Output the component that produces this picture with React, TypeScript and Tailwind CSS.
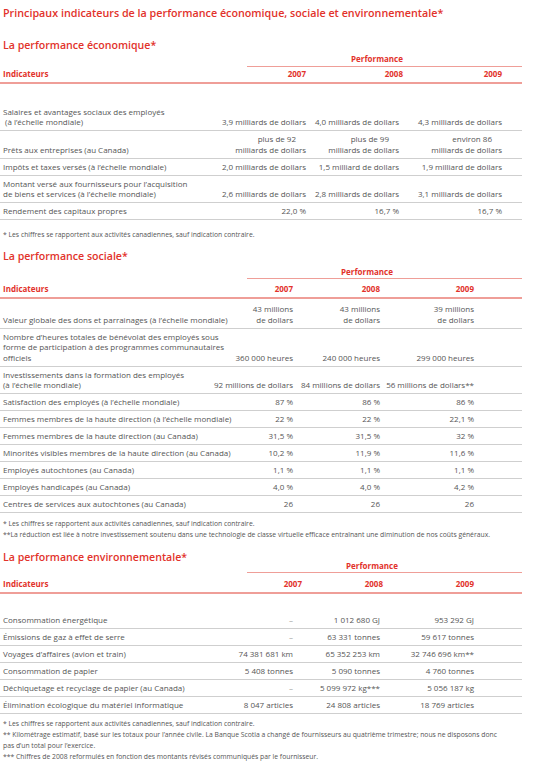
import React from 'react'

type Row = { label: React.ReactNode; values: React.ReactNode[]; pad?: string }

type Block = {
  title: string
  grid: string
  top: string
  perf: string
  perfRow: string
  head: string
  years: string[]
  rows: Row[]
  notesTop: string
  notes: React.ReactNode[]
}

const dash = <span className="text-[#9a9a9a]">–</span>

const economique: Row[] = [
  {
    label: (
      <>
        Salaires et avantages sociaux des employés
        <br />
        &nbsp;(à l’échelle mondiale)
      </>
    ),
    values: ['3,9 milliards de dollars', '4,0 milliards de dollars', '4,3 milliards de dollars'],
    pad: 'pt-[22.5px]',
  },
  {
    label: 'Prêts aux entreprises (au Canada)',
    values: [
      <>
        <span className="pr-[10px]">plus de 92</span>
        <br />
        milliards de dollars
      </>,
      <>
        <span className="pr-[10px]">plus de 99</span>
        <br />
        milliards de dollars
      </>,
      <>
        <span className="pr-[10px]">environ 86</span>
        <br />
        milliards de dollars
      </>,
    ],
  },
  {
    label: 'Impôts et taxes versés (à l’échelle mondiale)',
    values: ['2,0 milliards de dollars', '1,5 milliard de dollars', '1,9 milliard de dollars'],
  },
  {
    label: (
      <>
        Montant versé aux fournisseurs pour l’acquisition
        <br />
        de biens et services (à l’échelle mondiale)
      </>
    ),
    values: ['2,6 milliards de dollars', '2,8 milliards de dollars', '3,1 milliards de dollars'],
  },
  { label: 'Rendement des capitaux propres', values: ['22,0 %', '16,7 %', '16,7 %'] },
]

const sociale: Row[] = [
  {
    label: 'Valeur globale des dons et parrainages (à l’échelle mondiale)',
    values: [
      <>
        43 millions
        <br />
        de dollars
      </>,
      <>
        43 millions
        <br />
        de dollars
      </>,
      <>
        39 millions
        <br />
        de dollars
      </>,
    ],
    pad: 'pt-[5.5px]',
  },
  {
    label: (
      <>
        Nombre d’heures totales de bénévolat des employés sous
        <br />
        forme de participation à des programmes communautaires
        <br />
        officiels
      </>
    ),
    values: ['360 000 heures', '240 000 heures', '299 000 heures'],
  },
  {
    label: (
      <>
        Investissements dans la formation des employés
        <br />
        (à l’échelle mondiale)
      </>
    ),
    values: ['92 millions de dollars', '84 millions de dollars', '56 millions de dollars**'],
  },
  { label: 'Satisfaction des employés (à l’échelle mondiale)', values: ['87 %', '86 %', '86 %'] },
  { label: 'Femmes membres de la haute direction (à l’échelle mondiale)', values: ['22 %', '22 %', '22,1 %'] },
  { label: 'Femmes membres de la haute direction (au Canada)', values: ['31,5 %', '31,5 %', '32 %'] },
  { label: 'Minorités visibles membres de la haute direction (au Canada)', values: ['10,2 %', '11,9 %', '11,6 %'] },
  { label: 'Employés autochtones (au Canada)', values: ['1,1 %', '1,1 %', '1,1 %'] },
  { label: 'Employés handicapés (au Canada)', values: ['4,0 %', '4,0 %', '4,2 %'] },
  { label: 'Centres de services aux autochtones (au Canada)', values: ['26', '26', '26'] },
]

const environnement: Row[] = [
  { label: 'Consommation énergétique', values: [dash, '1 012 680 GJ', '953 292 GJ'], pad: 'pt-[20.5px]' },
  { label: 'Émissions de gaz à effet de serre', values: [dash, '63 331 tonnes', '59 617 tonnes'] },
  { label: 'Voyages d’affaires (avion et train)', values: ['74 381 681 km', '65 352 253 km', '32 746 696 km**'] },
  { label: 'Consommation de papier', values: ['5 408 tonnes', '5 090 tonnes', '4 760 tonnes'] },
  { label: 'Déchiquetage et recyclage de papier (au Canada)', values: [dash, '5 099 972 kg***', '5 056 187 kg'] },
  { label: 'Élimination écologique du matériel informatique', values: ['8 047 articles', '24 808 articles', '18 769 articles'] },
]

const note = '* Les chiffres se rapportent aux activités canadiennes, sauf indication contraire.'

const blocks: Block[] = [
  {
    title: 'La performance économique*',
    grid: 'grid grid-cols-[214px_92px_93px_103px]',
    top: 'mt-[18px]',
    perf: 'pr-[15px]',
    perfRow: 'mt-[2px]',
    head: 'pt-[2.5px]',
    years: ['', '-mr-[4px]', ''],
    rows: economique,
    notesTop: 'mt-[9px]',
    notes: [note],
  },
  {
    title: 'La performance sociale*',
    grid: 'grid grid-cols-[206px_87px_87px_94px]',
    top: 'mt-[8.5px]',
    perf: 'pr-[35px]',
    perfRow: 'mt-[4px]',
    head: 'pt-[4.5px]',
    years: ['', '', ''],
    rows: sociale,
    notesTop: 'mt-[5px]',
    notes: [
      note,
      '**La réduction est liée à notre investissement soutenu dans une technologie de classe virtuelle efficace entraînant une diminution de nos coûts généraux.',
    ],
  },
  {
    title: 'La performance environnementale*',
    grid: 'grid grid-cols-[206px_87px_87px_94px]',
    top: 'mt-[9.5px]',
    perf: 'pr-[25px]',
    perfRow: '-mt-[3px]',
    head: 'pt-[6px]',
    years: ['-mr-[9px]', '-mr-[3px]', ''],
    rows: environnement,
    notesTop: 'mt-[4.5px]',
    notes: [
      note,
      <>
        ** Kilométrage estimatif, basé sur les totaux pour l’année civile. La Banque Scotia a changé de fournisseurs au
        quatrième trimestre; nous ne disposons donc
        <br />
        pas d’un total pour l’exercice.
      </>,
      '*** Chiffres de 2008 reformulés en fonction des montants révisés communiqués par le fournisseur.',
    ],
  },
]

const Section = ({ block }: { block: Block }) => (
  <section className={block.top}>
    <h2 className="pl-[3px] text-[10.6px] leading-[14px] font-semibold text-[#e2322b]">{block.title}</h2>
    <div className="w-[522px]">
      <div className={`ml-[247px] border-b border-[#ef9e98] pb-[1.5px] ${block.perfRow}`}>
        <p className={`text-center text-[8px] leading-[10px] font-bold text-[#e2322b] ${block.perf}`}>Performance</p>
      </div>
      <div
        className={`${block.grid} border-b-2 border-[#ef9e98] pb-[3px] text-[8px] leading-[10px] font-bold text-[#e2322b] ${block.head}`}
      >
        <span className="pl-[3px]">Indicateurs</span>
        <span className={`text-right ${block.years[0]}`}>2007</span>
        <span className={`text-right ${block.years[1]}`}>2008</span>
        <span className={`text-right ${block.years[2]}`}>2009</span>
      </div>
      {block.rows.map((r, i) => (
        <div
          key={i}
          className={`${block.grid} items-end border-b border-[#cfcfcf] pb-[2.5px] text-[8px] leading-[10.5px] text-[#555] ${r.pad ?? 'pt-[3px]'}`}
        >
          <div className="pl-[3px] whitespace-nowrap">{r.label}</div>
          {r.values.map((v, j) => (
            <div key={j} className="text-right whitespace-nowrap">
              {v}
            </div>
          ))}
        </div>
      ))}
    </div>
    <div className={`pl-[3px] text-[6.8px] leading-[11px] text-[#555] ${block.notesTop}`}>
      {block.notes.map((n, i) => (
        <p key={i} className="whitespace-nowrap">
          {n}
        </p>
      ))}
    </div>
  </section>
)

export default function App() {
  return (
    <main className="w-[545px] min-h-[766px] bg-white pt-[6px] font-['Open_Sans',sans-serif]">
      <h1 className="pl-[3px] text-[10.75px] leading-[14px] font-semibold text-[#e2322b]">
        Principaux indicateurs de la performance économique, sociale et environnementale*
      </h1>
      {blocks.map((b, i) => (
        <Section key={i} block={b} />
      ))}
    </main>
  )
}
